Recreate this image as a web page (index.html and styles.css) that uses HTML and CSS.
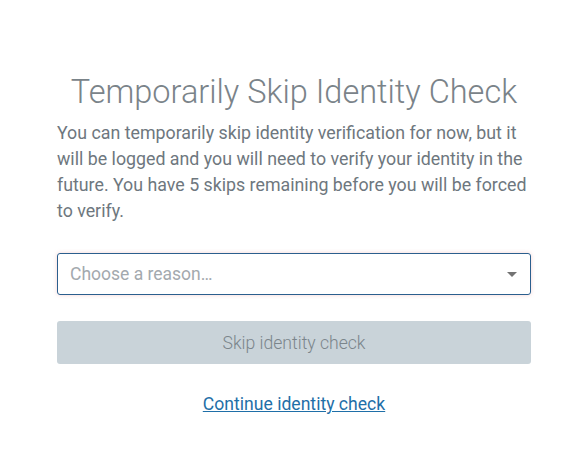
FILE: index.html
```html
<!DOCTYPE html>
<html>
<head>
<meta charset="utf-8">
<link rel="stylesheet" href="styles.css">
</head>
<body>
<main class="panel">
  <h1 class="title">Temporarily Skip Identity Check</h1>
  <p class="lead">You can temporarily skip identity verification for now, but it will be logged and you will need to verify your identity in the future. You have 5 skips remaining before you will be forced to verify.</p>
  <div class="select">
    <span class="placeholder">Choose a reason…</span>
    <span class="caret"></span>
  </div>
  <button class="skip" type="button">Skip identity check</button>
  <div class="continue-row"><a class="continue" href="#">Continue identity check</a></div>
</main>
</body>
</html>
```

FILE: styles.css
```css
html, body {
  margin: 0;
  padding: 0;
  background: #ffffff;
}
body {
  font-family: Roboto, "Liberation Sans", sans-serif;
  color: #6c757d;
}
.panel {
  width: 474px;
  margin-left: 57px;
  padding-top: 72px;
  display: flex;
  flex-direction: column;
}
.title {
  margin: 0;
  font-weight: 300;
  font-size: 32.5px;
  line-height: 40px;
  text-align: center;
  color: #7a8389;
}
.lead {
  margin: 8px -4px 0 0;
  font-size: 17.8px;
  line-height: 26px;
  color: #6e777e;
}
.select {
  margin-top: 29px;
  height: 40px;
  border: 1px solid #2b5f8e;
  border-radius: 3px;
  box-shadow: 0 0 4px rgba(230, 160, 160, 0.45);
  display: flex;
  align-items: center;
  justify-content: space-between;
  padding: 0 12px;
}
.placeholder {
  font-size: 17.5px;
  color: #a3a9ae;
}
.caret {
  width: 0;
  height: 0;
  border-left: 5px solid transparent;
  border-right: 5px solid transparent;
  border-top: 5px solid #737373;
  margin-right: 1px;
}
.skip {
  margin-top: 26px;
  height: 43px;
  border: none;
  border-radius: 3px;
  background: #c9d3d9;
  font-family: Roboto, "Liberation Sans", sans-serif;
  font-weight: 300;
  font-size: 17.6px;
  color: #7b858b;
}
.continue-row {
  margin-top: 30px;
  text-align: center;
}
.continue {
  font-size: 17.6px;
  color: #1f6fa8;
  text-decoration: underline;
}
```
